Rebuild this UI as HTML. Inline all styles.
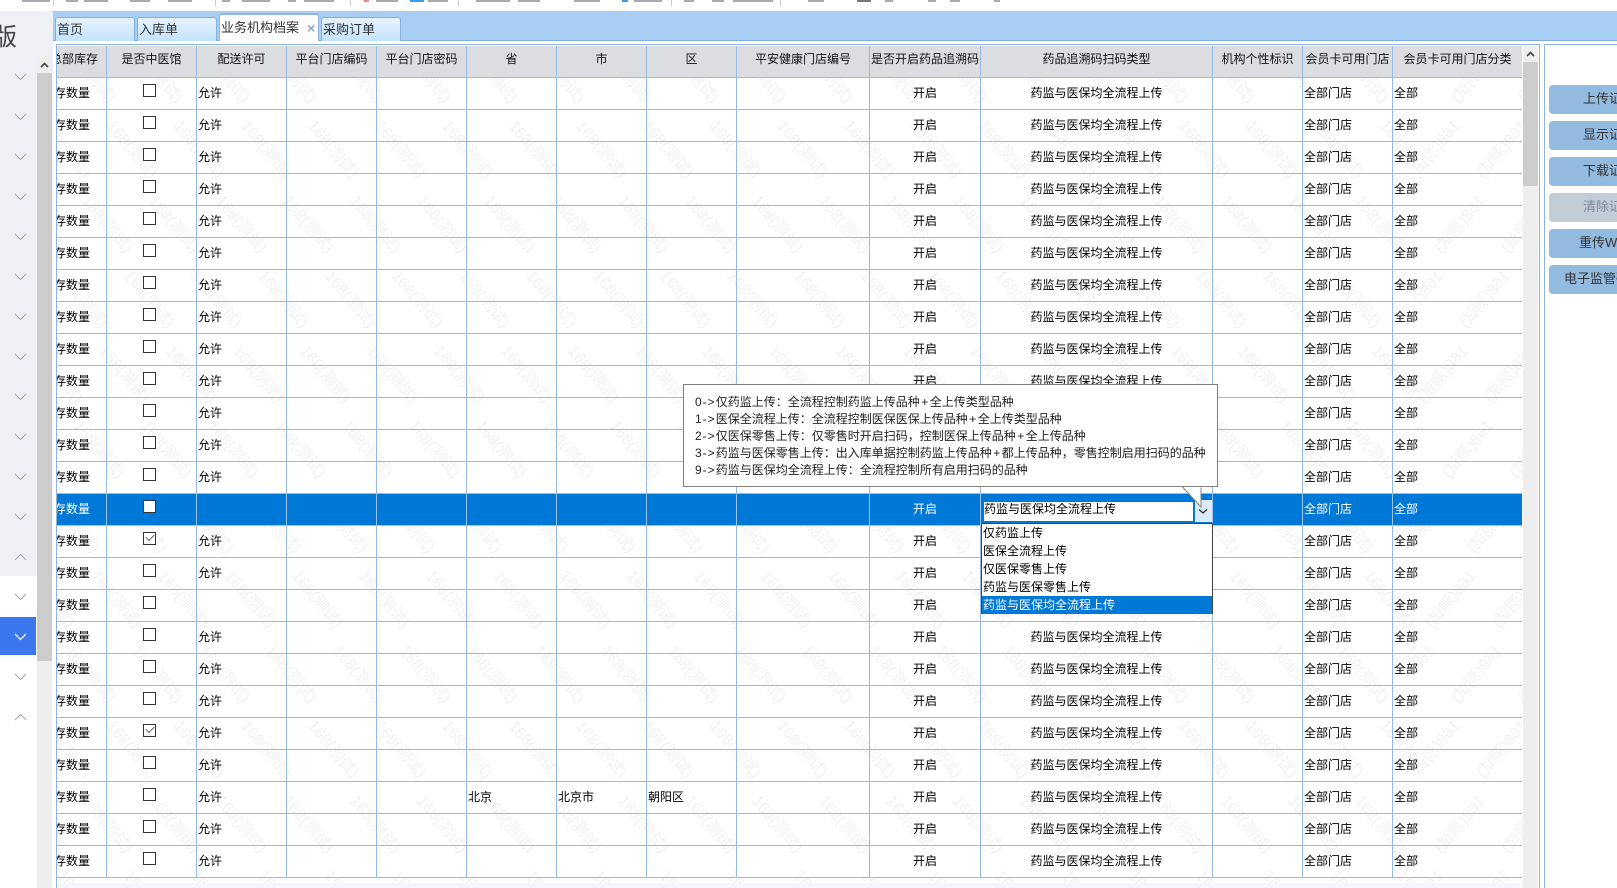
<!DOCTYPE html>
<html lang="zh-CN">
<head>
<meta charset="utf-8">
<title>业务机构档案</title>
<style>
html,body{margin:0;padding:0;width:1617px;height:888px;overflow:hidden;background:#fff}
body{position:relative;font:12px "Liberation Sans","Noto Sans CJK SC",sans-serif;color:#111}
.abs,.abs *{box-sizing:border-box}
.abs{position:absolute}
.frag{position:absolute;top:0;height:2px;background:#aaa}
.dv{position:absolute;top:0;height:6px;width:1px;background:#ccc}
.side{left:0;top:11px;width:53px;height:565px;background:#eff0f6}
.ban{left:-7px;top:24px;font-size:24px;line-height:28px;color:#444}
.sb{left:37px;top:56px;width:15px;height:832px;background:#eee;border-left:0}
.sel{left:0;top:617px;width:36px;height:38px;background:#3b78f0}
.band{left:53px;top:11px;width:1564px;height:30px;background:#a8cef4;border-bottom:1px solid #7fb0dd}
.tab{position:absolute;box-sizing:border-box;height:24px;top:17px;border:1px solid #80b0dc;border-bottom:0;border-radius:3px 3px 0 0;background:linear-gradient(#e6f3fd,#c3e3fd);font-size:13px;line-height:24px;padding-left:1px;color:#333;white-space:nowrap}
.tab.on{top:13px;height:28px;background:#fff;border:1px solid #8fb5dc;border-top:2px solid #8fb5dc;border-bottom:0;line-height:25px;padding-left:1px}
.tab b{position:absolute;left:87px;top:1px;color:#8aa9cc;font-size:14px}
.frame{left:56px;top:44px;width:1484px;height:844px;border:1px solid #8db5e0;border-bottom:0}
table{position:absolute;left:57px;top:46px;width:1465px;table-layout:fixed;border-collapse:separate;border-spacing:0}
th,td{padding:0;height:32px;box-sizing:border-box;border-right:1px solid #93bbe6;border-bottom:1px solid #93bbe6;overflow:hidden;white-space:nowrap;font-weight:normal;font-size:12px;line-height:31px;text-align:left}
th{background:#dcdde1;text-align:center;color:#111;line-height:27px;vertical-align:top}
th:last-child,td:last-child{border-right:0}
td{padding-left:1px;color:#000}
td:nth-child(2),td:nth-child(10),td:nth-child(11){text-align:center;padding-left:0}
td:first-child{padding-left:0}
td:first-child span{display:block;margin-left:-39px;width:90px;text-align:left}
th:first-child span{display:block;margin-left:-7px;width:60px;text-align:left}
i.c{display:inline-block;position:relative;left:-2px;top:-3px;width:13px;height:13px;box-sizing:border-box;border:1px solid #333;background:#fff;vertical-align:middle}
i.k:after{content:"";position:absolute;left:2px;top:1px;width:7px;height:4px;border-left:1.5px solid #666;border-bottom:1.5px solid #666;transform:rotate(-45deg)}
tr.s td{background:#0078d7;color:#fff;border-color:#9cc3ea}
.rs{left:1523px;top:46px;width:15px;height:842px;background:#eee}
.rt{position:absolute;left:0;top:16px;width:15px;height:124px;background:#ccc}
.pale{left:57px;top:883px;width:1465px;height:5px;background:#f3f6fd}
.panel{left:1544px;top:44px;width:80px;height:844px;border:1px solid #8db5e0;border-right:0;border-bottom:0}
.btn{position:absolute;left:1549px;width:90px;height:29px;background:#93badf;border-radius:4px;font-size:13px;line-height:28px;color:#333;white-space:nowrap}
.btn.d{background:#c3ccd7;color:#7f8c9c}
.tip{left:683px;top:384px;width:535px;height:103px;background:#fff;border:1px solid #808080;padding:8.5px 0 0 11px;font-size:12px;line-height:17.2px;color:#222;white-space:nowrap}
.tip span{letter-spacing:1px}
.tip em{font-style:normal;margin:0 1.5px}
.inp{left:982px;top:500px;width:212px;height:23px;background:#fff;border:2px solid #0078d7;border-right:0;line-height:15px;padding:0;color:#000;white-space:nowrap}
.arr{left:1193px;top:500px;width:19px;height:22px;background:#dcebf9;border-left:2px solid #0078d7}
.list{left:981px;top:523px;width:232px;height:91px;background:#fff;border:1px solid #444;border-bottom:0;color:#000}
.list div{height:18px;line-height:18px;padding-left:1px;white-space:nowrap}
.list .o{background:#0078d7;color:#fff}
</style>
</head>
<body>
<div class="frag" style="left:22px;width:28px"></div>
<div class="frag" style="left:66px;width:12px"></div>
<div class="frag" style="left:84px;width:24px"></div>
<div class="frag" style="left:130px;width:20px"></div>
<div class="frag" style="left:168px;width:24px"></div>
<div class="frag" style="left:222px;width:8px"></div>
<div class="frag" style="left:242px;width:28px"></div>
<div class="frag" style="left:288px;width:8px"></div>
<div class="frag" style="left:304px;width:30px"></div>
<div class="frag" style="left:364px;width:5px;background:#e88"></div>
<div class="frag" style="left:376px;width:22px"></div>
<div class="frag" style="left:410px;width:14px;background:#3a9cf0"></div>
<div class="frag" style="left:428px;width:20px"></div>
<div class="frag" style="left:476px;width:34px"></div>
<div class="frag" style="left:518px;width:22px"></div>
<div class="frag" style="left:574px;width:26px"></div>
<div class="frag" style="left:622px;width:6px;background:#3a9cf0"></div>
<div class="frag" style="left:634px;width:28px"></div>
<div class="frag" style="left:684px;width:10px"></div>
<div class="frag" style="left:712px;width:12px"></div>
<div class="frag" style="left:733px;width:40px"></div>
<div class="frag" style="left:808px;width:16px"></div>
<div class="frag" style="left:857px;width:14px;background:#777"></div>
<div class="frag" style="left:885px;width:8px"></div>
<div class="frag" style="left:928px;width:8px"></div>
<div class="frag" style="left:950px;width:10px"></div>
<div class="frag" style="left:994px;width:6px"></div>
<div class="dv" style="left:53px"></div>
<div class="dv" style="left:215px"></div>
<div class="dv" style="left:350px"></div>
<div class="dv" style="left:458px"></div>
<div class="dv" style="left:671px"></div>
<div class="dv" style="left:780px"></div>

<div class="abs side"></div>
<div class="abs ban">版</div>
<div class="abs sel"></div>

<svg class="abs" style="left:0;top:0" width="36" height="888" fill="none" stroke="#a3a8b8" stroke-width="1">
<path d="M15 74l5.500 5.500 5.500-5.500M15 114l5.500 5.500 5.500-5.500M15 154l5.500 5.500 5.500-5.500M15 194l5.500 5.500 5.500-5.500M15 234l5.500 5.500 5.500-5.500M15 274l5.500 5.500 5.500-5.500M15 314l5.500 5.500 5.500-5.500M15 354l5.500 5.500 5.500-5.500M15 394l5.500 5.500 5.500-5.500M15 434l5.500 5.500 5.500-5.500M15 474l5.500 5.500 5.500-5.500M15 514l5.500 5.500 5.500-5.500"/>
<path d="M15 560l5.500-5.500 5.500 5.500M15 594l5.500 5.500 5.500-5.500M15 674l5.500 5.500 5.500-5.500M15 720l5.500-5.500 5.500 5.500"/>
<path d="M15 634l5.500 5.500 5.500-5.500" stroke="#fff" stroke-width="1.300"/>
</svg>

<div class="abs sb"><div class="abs" style="left:0;top:17px;width:15px;height:588px;background:#ccc"></div>
<svg class="abs" style="left:3px;top:6px" width="9" height="6" fill="none" stroke="#444" stroke-width="1.600"><path d="M1 5l3.500-3.500L8 5"/></svg></div>

<div class="abs band"></div>
<div class="tab" style="left:55px;width:80px">首页</div>
<div class="tab" style="left:137px;width:80px">入库单</div>
<div class="tab on" style="left:219px;width:100px">业务机构档案<b>×</b></div>
<div class="tab" style="left:321px;width:80px">采购订单</div>

<div class="abs frame"></div>

<svg class="abs" style="left:0;top:0" width="1617" height="888">
<defs>
<pattern id="wm" patternUnits="userSpaceOnUse" width="67" height="600" x="-3" y="3">
<g fill="#f1f1f1" font-size="16" font-family="Liberation Sans,Noto Sans CJK SC,sans-serif">
<text transform="translate(0 48) rotate(50)">168(测试)</text><text transform="translate(-67 48) rotate(50)">168(测试)</text>
<text transform="translate(42 123) rotate(50)">168(测试)</text><text transform="translate(-25 123) rotate(50)">168(测试)</text>
<text transform="translate(17 198) rotate(50)">168(测试)</text><text transform="translate(-50 198) rotate(50)">168(测试)</text>
<text transform="translate(59 273) rotate(50)">168(测试)</text><text transform="translate(-8 273) rotate(50)">168(测试)</text>
<text transform="translate(34 348) rotate(50)">168(测试)</text><text transform="translate(-33 348) rotate(50)">168(测试)</text>
<text transform="translate(9 423) rotate(50)">168(测试)</text><text transform="translate(-58 423) rotate(50)">168(测试)</text>
<text transform="translate(51 498) rotate(50)">168(测试)</text><text transform="translate(-16 498) rotate(50)">168(测试)</text>
<text transform="translate(26 573) rotate(50)">168(测试)</text><text transform="translate(-41 573) rotate(50)">168(测试)</text>
<text transform="translate(26 -27) rotate(50)">168(测试)</text><text transform="translate(-41 -27) rotate(50)">168(测试)</text>
</g>
</pattern>
</defs>
<rect x="57" y="78" width="1363" height="805" fill="url(#wm)"/>
<rect x="1318" y="78" width="102" height="805" fill="url(#wm)" transform="translate(2840 0) scale(-1 1)"/>
</svg>

<table>
<colgroup><col style="width:50px"><col style="width:90px"><col style="width:90px"><col style="width:90px"><col style="width:90px"><col style="width:90px"><col style="width:90px"><col style="width:90px"><col style="width:133px"><col style="width:111px"><col style="width:232px"><col style="width:90px"><col style="width:90px"><col style="width:129px"></colgroup>
<tr><th><span>总部库存</span></th><th>是否中医馆</th><th>配送许可</th><th>平台门店编码</th><th>平台门店密码</th><th>省</th><th>市</th><th>区</th><th>平安健康门店编号</th><th>是否开启药品追溯码</th><th>药品追溯码扫码类型</th><th>机构个性标识</th><th>会员卡可用门店</th><th>会员卡可用门店分类</th></tr>
<tr><td><span>总部库存数量</span></td><td><i class="c"></i></td><td>允许</td><td></td><td></td><td></td><td></td><td></td><td></td><td>开启</td><td>药监与医保均全流程上传</td><td></td><td>全部门店</td><td>全部</td></tr>
<tr><td><span>总部库存数量</span></td><td><i class="c"></i></td><td>允许</td><td></td><td></td><td></td><td></td><td></td><td></td><td>开启</td><td>药监与医保均全流程上传</td><td></td><td>全部门店</td><td>全部</td></tr>
<tr><td><span>总部库存数量</span></td><td><i class="c"></i></td><td>允许</td><td></td><td></td><td></td><td></td><td></td><td></td><td>开启</td><td>药监与医保均全流程上传</td><td></td><td>全部门店</td><td>全部</td></tr>
<tr><td><span>总部库存数量</span></td><td><i class="c"></i></td><td>允许</td><td></td><td></td><td></td><td></td><td></td><td></td><td>开启</td><td>药监与医保均全流程上传</td><td></td><td>全部门店</td><td>全部</td></tr>
<tr><td><span>总部库存数量</span></td><td><i class="c"></i></td><td>允许</td><td></td><td></td><td></td><td></td><td></td><td></td><td>开启</td><td>药监与医保均全流程上传</td><td></td><td>全部门店</td><td>全部</td></tr>
<tr><td><span>总部库存数量</span></td><td><i class="c"></i></td><td>允许</td><td></td><td></td><td></td><td></td><td></td><td></td><td>开启</td><td>药监与医保均全流程上传</td><td></td><td>全部门店</td><td>全部</td></tr>
<tr><td><span>总部库存数量</span></td><td><i class="c"></i></td><td>允许</td><td></td><td></td><td></td><td></td><td></td><td></td><td>开启</td><td>药监与医保均全流程上传</td><td></td><td>全部门店</td><td>全部</td></tr>
<tr><td><span>总部库存数量</span></td><td><i class="c"></i></td><td>允许</td><td></td><td></td><td></td><td></td><td></td><td></td><td>开启</td><td>药监与医保均全流程上传</td><td></td><td>全部门店</td><td>全部</td></tr>
<tr><td><span>总部库存数量</span></td><td><i class="c"></i></td><td>允许</td><td></td><td></td><td></td><td></td><td></td><td></td><td>开启</td><td>药监与医保均全流程上传</td><td></td><td>全部门店</td><td>全部</td></tr>
<tr><td><span>总部库存数量</span></td><td><i class="c"></i></td><td>允许</td><td></td><td></td><td></td><td></td><td></td><td></td><td>开启</td><td>药监与医保均全流程上传</td><td></td><td>全部门店</td><td>全部</td></tr>
<tr><td><span>总部库存数量</span></td><td><i class="c"></i></td><td>允许</td><td></td><td></td><td></td><td></td><td></td><td></td><td>开启</td><td>药监与医保均全流程上传</td><td></td><td>全部门店</td><td>全部</td></tr>
<tr><td><span>总部库存数量</span></td><td><i class="c"></i></td><td>允许</td><td></td><td></td><td></td><td></td><td></td><td></td><td>开启</td><td>药监与医保均全流程上传</td><td></td><td>全部门店</td><td>全部</td></tr>
<tr><td><span>总部库存数量</span></td><td><i class="c"></i></td><td>允许</td><td></td><td></td><td></td><td></td><td></td><td></td><td>开启</td><td>药监与医保均全流程上传</td><td></td><td>全部门店</td><td>全部</td></tr>
<tr class="s"><td><span>总部库存数量</span></td><td><i class="c"></i></td><td></td><td></td><td></td><td></td><td></td><td></td><td></td><td>开启</td><td></td><td></td><td>全部门店</td><td>全部</td></tr>
<tr><td><span>总部库存数量</span></td><td><i class="c k"></i></td><td>允许</td><td></td><td></td><td></td><td></td><td></td><td></td><td>开启</td><td>药监与医保均全流程上传</td><td></td><td>全部门店</td><td>全部</td></tr>
<tr><td><span>总部库存数量</span></td><td><i class="c"></i></td><td>允许</td><td></td><td></td><td></td><td></td><td></td><td></td><td>开启</td><td>药监与医保均全流程上传</td><td></td><td>全部门店</td><td>全部</td></tr>
<tr><td><span>总部库存数量</span></td><td><i class="c"></i></td><td></td><td></td><td></td><td></td><td></td><td></td><td></td><td>开启</td><td>药监与医保均全流程上传</td><td></td><td>全部门店</td><td>全部</td></tr>
<tr><td><span>总部库存数量</span></td><td><i class="c"></i></td><td>允许</td><td></td><td></td><td></td><td></td><td></td><td></td><td>开启</td><td>药监与医保均全流程上传</td><td></td><td>全部门店</td><td>全部</td></tr>
<tr><td><span>总部库存数量</span></td><td><i class="c"></i></td><td>允许</td><td></td><td></td><td></td><td></td><td></td><td></td><td>开启</td><td>药监与医保均全流程上传</td><td></td><td>全部门店</td><td>全部</td></tr>
<tr><td><span>总部库存数量</span></td><td><i class="c"></i></td><td>允许</td><td></td><td></td><td></td><td></td><td></td><td></td><td>开启</td><td>药监与医保均全流程上传</td><td></td><td>全部门店</td><td>全部</td></tr>
<tr><td><span>总部库存数量</span></td><td><i class="c k"></i></td><td>允许</td><td></td><td></td><td></td><td></td><td></td><td></td><td>开启</td><td>药监与医保均全流程上传</td><td></td><td>全部门店</td><td>全部</td></tr>
<tr><td><span>总部库存数量</span></td><td><i class="c"></i></td><td>允许</td><td></td><td></td><td></td><td></td><td></td><td></td><td>开启</td><td>药监与医保均全流程上传</td><td></td><td>全部门店</td><td>全部</td></tr>
<tr><td><span>总部库存数量</span></td><td><i class="c"></i></td><td>允许</td><td></td><td></td><td>北京</td><td>北京市</td><td>朝阳区</td><td></td><td>开启</td><td>药监与医保均全流程上传</td><td></td><td>全部门店</td><td>全部</td></tr>
<tr><td><span>总部库存数量</span></td><td><i class="c"></i></td><td>允许</td><td></td><td></td><td></td><td></td><td></td><td></td><td>开启</td><td>药监与医保均全流程上传</td><td></td><td>全部门店</td><td>全部</td></tr>
<tr><td><span>总部库存数量</span></td><td><i class="c"></i></td><td>允许</td><td></td><td></td><td></td><td></td><td></td><td></td><td>开启</td><td>药监与医保均全流程上传</td><td></td><td>全部门店</td><td>全部</td></tr>
</table>

<div class="abs pale"></div>

<div class="abs rs"><div class="rt"></div>
<svg class="abs" style="left:3px;top:5px" width="9" height="6" fill="none" stroke="#444" stroke-width="1.600"><path d="M1 5l3.500-3.500L8 5"/></svg></div>

<div class="abs panel"></div>
<div class="btn" style="top:85px;padding-left:34px">上传证书</div>
<div class="btn" style="top:121px;padding-left:34px">显示证书</div>
<div class="btn" style="top:157px;padding-left:34px">下载证书</div>
<div class="btn d" style="top:193px;padding-left:34px">清除证书</div>
<div class="btn" style="top:229px;padding-left:30px">重传WI</div>
<div class="btn" style="top:265px;padding-left:15px">电子监管码</div>

<div class="abs inp">药监与医保均全流程上传</div>
<div class="abs arr"></div>
<svg class="abs" style="left:1195px;top:500px" width="17" height="22" fill="none" stroke="#333" stroke-width="1.400"><path d="M4 9.500l4 3.500 4-3.500"/></svg>

<div class="abs list">
<div>仅药监上传</div>
<div>医保全流程上传</div>
<div>仅医保零售上传</div>
<div>药监与医保零售上传</div>
<div class="o">药监与医保均全流程上传</div>
</div>

<div class="abs tip"><span>0-&gt;</span>仅药监上传：全流程控制药监上传品种<em>+</em>全上传类型品种<br><span>1-&gt;</span>医保全流程上传：全流程控制医保医保上传品种<em>+</em>全上传类型品种<br><span>2-&gt;</span>仅医保零售上传：仅零售时开启扫码，控制医保上传品种<em>+</em>全上传品种<br><span>3-&gt;</span>药监与医保零售上传：出入库单据控制药监上传品种<em>+</em>都上传品种，零售控制启用扫码的品种<br><span>9-&gt;</span>药监与医保均全流程上传：全流程控制所有启用扫码的品种</div>
<svg class="abs" style="left:1175px;top:480px" width="50" height="32"><path d="M7 7.500L26 27V7z" fill="#fff"/><path d="M7 6.500L26 27V7.500" fill="none" stroke="#808080"/></svg>
</body>
</html>
